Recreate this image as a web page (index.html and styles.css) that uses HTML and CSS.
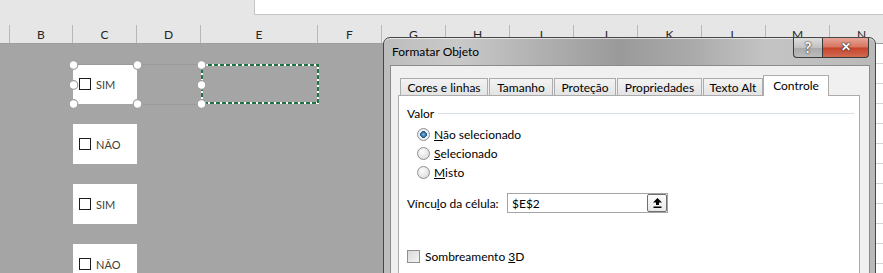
FILE: index.html
```html
<!DOCTYPE html>
<html lang="pt-BR">
<head>
    <meta charset="utf-8">
    <title>Formatar Objeto</title>
    <link rel="stylesheet" href="styles.css">
</head>
<body>
    <div class="app">
        <!-- formula bar strip -->
        <div class="topbar">
            <div class="formula"></div>
        </div>

        <!-- column headers -->
        <div class="colheads">
            <div class="ch corner"></div>
            <div class="ch colB">B</div>
            <div class="ch">C</div>
            <div class="ch">D</div>
            <div class="ch colE">E</div>
            <div class="ch">F</div>
            <div class="ch">G</div>
            <div class="ch">H</div>
            <div class="ch">I</div>
            <div class="ch">J</div>
            <div class="ch">K</div>
            <div class="ch">L</div>
            <div class="ch">M</div>
            <div class="ch">N</div>
        </div>

        <div class="sheet">
            <div class="controls">
                <div class="ctl"><span class="sq"></span>SIM</div>
                <div class="ctl"><span class="sq"></span>NÃO</div>
                <div class="ctl"><span class="sq"></span>SIM</div>
                <div class="ctl"><span class="sq"></span>NÃO</div>
            </div>
            <div class="rightcells"></div>

            <!-- selection handles + copy marquee drawn over the cells -->
            <svg class="selection" width="330" height="70" viewBox="0 0 330 70">
                <line x1="73" y1="20.5" x2="201" y2="20.5" stroke="#9a9a9a" stroke-width="1"/>
                <line x1="137" y1="60.5" x2="201" y2="60.5" stroke="#9a9a9a" stroke-width="1"/>
                <rect x="202" y="21" width="116" height="38" fill="none" stroke="#fff" stroke-width="2"/>
                <rect x="202" y="21" width="116" height="38" fill="none" stroke="#217346" stroke-width="2" stroke-dasharray="4 2"/>
                <g fill="#fff" stroke="#a0a0a0" stroke-width="1.2">
                    <circle cx="73.5" cy="21" r="4.3"/>
                    <circle cx="137.5" cy="21" r="4.3"/>
                    <circle cx="201.5" cy="21" r="4.3"/>
                    <circle cx="73.5" cy="41" r="4.3"/>
                    <circle cx="201.5" cy="41" r="4.3"/>
                    <circle cx="73.5" cy="60" r="4.3"/>
                    <circle cx="137.5" cy="60" r="4.3"/>
                    <circle cx="201.5" cy="60" r="4.3"/>
                </g>
            </svg>
        </div>

        <!-- dialog window -->
        <div class="dialog">
            <div class="titlebar">
                <span class="title">Formatar Objeto</span>
                <div class="winbtns">
                    <div class="wb help">?</div>
                    <div class="wb close">✕</div>
                </div>
            </div>
            <div class="client">
                <div class="tabs">
                    <div class="tab t1">Cores e linhas</div>
                    <div class="tab t2">Tamanho</div>
                    <div class="tab t3">Proteção</div>
                    <div class="tab t4">Propriedades</div>
                    <div class="tab t5">Texto Alt</div>
                    <div class="tab active">Controle</div>
                </div>
                <div class="panel">
                    <div class="group-title">Valor</div>
                    <div class="radios">
                        <div class="opt"><span class="radio checked"></span><span><u>N</u>ão selecionado</span></div>
                        <div class="opt"><span class="radio"></span><span><u>S</u>elecionado</span></div>
                        <div class="opt"><span class="radio"></span><span><u>M</u>isto</span></div>
                    </div>
                    <div class="link-row">
                        <span class="link-label">Víncu<u>l</u>o da célula:</span>
                        <div class="refbox">
                            <span class="reftext">$E$2</span>
                            <div class="refbtn">
                                <svg width="9" height="10" viewBox="0 0 9 10">
                                    <path d="M4.5 0 L9 4.5 L6 4.5 L6 7 L3 7 L3 4.5 L0 4.5 Z" fill="#000"/>
                                    <rect x="0.5" y="8.5" width="8" height="1.5" fill="#000"/>
                                </svg>
                            </div>
                        </div>
                    </div>
                    <div class="check-row">
                        <span class="cb"></span><span>Sombreamento <u>3</u>D</span>
                    </div>
                </div>
            </div>
        </div>
    </div>
</body>
</html>
```

FILE: styles.css
```css
body {
    margin: 0;
    padding: 0;
    background-color: #e6e6e6;
    font-family: "Lato", "Liberation Sans", sans-serif;
    overflow: hidden;
}

.app {
    position: relative;
    width: 883px;
    height: 273px;
    overflow: hidden;
}

/* ---- top strip ---- */
.topbar {
    height: 24px;
}

.formula {
    margin-left: 254px;
    height: 14px;
    background-color: #fff;
    border-left: 1px solid #c6c6c6;
    border-bottom: 1px solid #c6c6c6;
}

/* ---- column headers ---- */
.colheads {
    display: flex;
    height: 19px;
    border-bottom: 1px solid #9e9e9e;
    font-size: 12px;
    color: #262626;
}

.ch {
    flex: 0 0 63px;
    border-right: 1px solid #b8b8b8;
    text-align: center;
    line-height: 19px;
    margin-top: 1px;
}

.ch.corner { flex-basis: 9px; }
.ch.colB { flex-basis: 62px; }
.ch.colE { flex-basis: 116px; }

/* ---- the grey sheet ---- */
.sheet {
    position: relative;
    display: flex;
    height: 229px;
    background-color: #a5a5a5;
}

.controls {
    display: flex;
    flex-direction: column;
    gap: 20px;
    padding: 20px 0 0 73px;
}

.ctl {
    display: flex;
    flex-shrink: 0;
    align-items: center;
    width: 64px;
    height: 40px;
    box-sizing: border-box;
    padding-left: 6px;
    background-color: #fff;
    font-size: 11px;
    color: #404040;
}

.sq {
    width: 10px;
    height: 10px;
    border: 1px solid #1c1c1c;
    margin-right: 5px;
}

.rightcells {
    margin-left: auto;
    width: 8px;
    background-color: #fff;
    background-image: repeating-linear-gradient(to bottom, transparent 0, transparent 19px, #d4d4d4 19px, #d4d4d4 20px);
}

.selection {
    position: absolute;
    left: 0;
    top: 0;
}

/* ---- dialog ---- */
.dialog {
    position: absolute;
    left: 383px;
    top: 37px;
    width: 493px;
    height: 250px;
    box-sizing: border-box;
    padding: 0 5px 0 6px;
    border: 1px solid #474747;
    border-radius: 7px 7px 0 0;
    background: linear-gradient(to right, #bdbdbd 0%, #c9c9c9 15%, #b0b0b0 32%, #9a9a9a 48%, #a9a9a9 62%, #c4c4c4 78%, #b9b9b9 100%);
    box-shadow: inset 0 1px 0 rgba(255, 255, 255, 0.6);
}

.titlebar {
    display: flex;
    height: 27px;
}

.title {
    padding: 6px 0 0 2px;
    font-size: 12px;
    color: #000;
}

.winbtns {
    display: flex;
    margin-left: auto;
    margin-right: 1px;
}

.wb {
    height: 19px;
    border: 1px solid #3b3b3b;
    border-top: none;
    color: #fff;
    font-weight: bold;
    text-align: center;
    line-height: 18px;
    text-shadow: 0 0 2px #222, 0 0 1px #222;
}

.wb.help {
    width: 28px;
    border-radius: 0 0 0 4px;
    border-right: none;
    background: linear-gradient(to bottom, #dedede 0%, #c2c2c2 50%, #a9a9a9 51%, #bcbcbc 100%);
    font-size: 15px;
}

.wb.close {
    width: 45px;
    border-radius: 0 0 4px 0;
    background: linear-gradient(to bottom, #e6a597 0%, #d7755f 48%, #c5432a 52%, #d26a52 100%);
    font-size: 12px;
}

.client {
    height: 220px;
    border: 1px solid #8b8b8b;
    border-bottom: none;
    background-color: #f0f0f0;
    padding: 8px 9px 0 7px;
    font-size: 12px;
    color: #000;
}

.tabs {
    display: flex;
    align-items: flex-end;
    height: 21px;
    padding-left: 2px;
    position: relative;
    z-index: 1;
}

.tab {
    height: 17px;
    box-sizing: border-box;
    border: 1px solid #acacac;
    border-bottom: none;
    background: linear-gradient(to bottom, #f3f3f3, #e3e3e3);
    text-align: center;
    line-height: 17px;
    margin-right: 1px;
}

.t1 { width: 88px; }
.t2 { width: 64px; }
.t3 { width: 62px; }
.t4 { width: 85px; }
.t5 { width: 60px; }

.tab.active {
    width: 66px;
    height: 21px;
    margin-left: -1px;
    margin-bottom: -1px;
    background: #fff;
    line-height: 20px;
}

.panel {
    height: 190px;
    border: 1px solid #acacac;
    background-color: #fff;
    padding: 9px 5px 0 8px;
}

.group-title {
    display: flex;
    align-items: center;
    height: 16px;
}

.group-title::after {
    content: "";
    flex: 1;
    height: 1px;
    margin-left: 4px;
    background-color: #d5dfe5;
}

.radios {
    margin-top: 4px;
    padding-left: 10px;
}

.opt {
    display: flex;
    align-items: center;
    height: 19px;
}

.radio {
    width: 11px;
    height: 11px;
    border: 1px solid #8e8f8f;
    border-radius: 50%;
    margin-right: 4px;
    background: radial-gradient(circle at 40% 35%, #fdfdfd 0%, #e4e4e4 60%, #cfcfcf 100%);
}

.radio.checked {
    background: radial-gradient(circle, #7fb6e0 0%, #2c6ea6 32%, #1c4f7c 40%, #eef2f5 46%, #e0e0e0 100%);
}

.link-row {
    display: flex;
    align-items: center;
    height: 20px;
    margin-top: 11px;
}

.link-label {
    width: 100px;
}

.refbox {
    display: flex;
    align-items: center;
    width: 161px;
    height: 20px;
    box-sizing: border-box;
    border: 1px solid #a4a4a4;
}

.reftext {
    flex: 1;
    padding-left: 4px;
}

.refbtn {
    display: flex;
    align-items: center;
    justify-content: center;
    width: 18px;
    height: 16px;
    border: 1px solid #6f6f6f;
    border-radius: 2px;
    background: linear-gradient(to bottom, #fdfdfd, #e8e8e8);
}

.check-row {
    display: flex;
    align-items: center;
    height: 16px;
    margin-top: 35px;
}

.cb {
    width: 11px;
    height: 11px;
    border: 1px solid #8e8f8f;
    margin-right: 5px;
    background: linear-gradient(135deg, #d9d9d9, #f4f4f4);
}
```
